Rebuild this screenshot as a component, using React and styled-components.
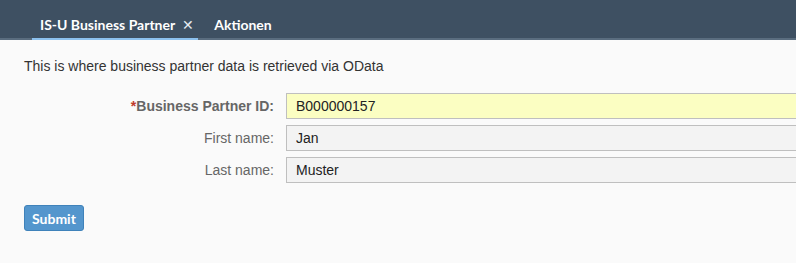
import React from "react";
import styled, { createGlobalStyle } from "styled-components";

const Global = createGlobalStyle`
  html, body { margin: 0; padding: 0; background: #fafafa; }
  body { font-family: "Liberation Sans", Arial, sans-serif; }
`;

const Page = styled.div`
  width: 796px;
  height: 263px;
  overflow: hidden;
  background: #fafafa;
`;

const Header = styled.div`
  height: 40px;
  background: #3e5062;
  display: flex;
  align-items: stretch;
  padding-left: 32px;
  box-shadow: inset 0 -2px 0 #5a6d7f;
  box-sizing: border-box;
`;

const Tab = styled.div`
  height: 40px;
  box-sizing: border-box;
  padding: 16px ${(p) => (p.$active ? "4px" : "7px")} 0 8px;
  display: flex;
  align-items: flex-start;
  gap: 7px;
  color: #fff;
  font-family: "Lato", "Liberation Sans", sans-serif;
  font-weight: 700;
  font-size: 14px;
  line-height: 17px;
  border-bottom: 2px solid ${(p) => (p.$active ? "#8cc1ee" : "transparent")};
  margin-right: ${(p) => (p.$active ? "8px" : "0")};
`;

const Close = styled.span`
  font-weight: 400;
  font-size: 14px;
  color: #e6ebf0;
`;

const Content = styled.div`
  padding: 17px 24px 0;
`;

const Intro = styled.p`
  margin: 0 0 18px;
  font-size: 14px;
  line-height: 18px;
  color: #333;
`;

const Form = styled.div`
  display: grid;
  grid-template-columns: 250px 520px;
  column-gap: 12px;
  row-gap: 6px;
  align-items: center;
`;

const Label = styled.label`
  text-align: right;
  font-size: 14px;
  color: #666;
  font-weight: ${(p) => (p.$required ? 700 : 400)};
`;

const Star = styled.span`
  color: #c0392b;
`;

const Input = styled.input`
  height: 26px;
  box-sizing: border-box;
  border: 1px solid #bfbfbf;
  border-right: none;
  background: ${(p) => (p.$required ? "#fbfec2" : "#f3f3f3")};
  padding: 0 9px;
  font-family: "Liberation Sans", Arial, sans-serif;
  font-size: 14px;
  color: #222;
  outline: none;
  width: 100%;
`;

const Button = styled.button`
  margin-top: 22px;
  height: 26px;
  padding: 0 7px;
  background: #5496cd;
  border: 1px solid #3f82ba;
  border-radius: 3px;
  color: #fff;
  font-family: "Lato", "Liberation Sans", sans-serif;
  font-weight: 700;
  font-size: 14px;
`;

export default function App() {
  return (
    <Page>
      <Global />
      <Header>
        <Tab $active>
          <span>IS-U Business Partner</span>
          <Close>✕</Close>
        </Tab>
        <Tab>Aktionen</Tab>
      </Header>
      <Content>
        <Intro>This is where business partner data is retrieved via OData</Intro>
        <Form>
          <Label $required>
            <Star>*</Star>Business Partner ID:
          </Label>
          <Input $required defaultValue="B000000157" />
          <Label>First name:</Label>
          <Input defaultValue="Jan" readOnly />
          <Label>Last name:</Label>
          <Input defaultValue="Muster" readOnly />
        </Form>
        <Button>Submit</Button>
      </Content>
    </Page>
  );
}
